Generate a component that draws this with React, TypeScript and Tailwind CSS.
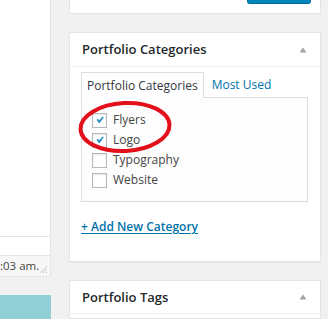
import React from 'react'

const CATEGORIES = [
  { name: 'Flyers', checked: true },
  { name: 'Logo', checked: true },
  { name: 'Typography', checked: false },
  { name: 'Website', checked: false },
]

function Toggle() {
  return (
    <svg width="8" height="6" viewBox="0 0 8 6" className="shrink-0">
      <polygon points="4,0.5 7.5,5.5 0.5,5.5" fill="#a0a5aa" />
    </svg>
  )
}

function Check({ checked }: { checked: boolean }) {
  return (
    <span className="w-[15px] h-[15px] shrink-0 border border-[#b4b9be] bg-white shadow-[inset_0_1px_2px_rgba(0,0,0,0.1)] flex items-center justify-center">
      {checked && (
        <svg width="16" height="16" viewBox="0 0 20 20">
          <path d="M14.83 4.89l1.34.94-5.81 8.38H9.02L5.78 9.67l1.34-1.25 2.57 2.4z" fill="#1e8cbe" stroke="#1e8cbe" strokeWidth="0.6" />
        </svg>
      )}
    </span>
  )
}

export default function App() {
  return (
    <div
      className="relative w-[328px] h-[319px] overflow-hidden bg-[#f1f1f1] flex"
      style={{ fontFamily: '"Open Sans", "Noto Sans", sans-serif' }}
    >
      {/* left editor column */}
      <div className="w-[51px] shrink-0 flex flex-col">
        <div className="h-[237px] bg-white border-r border-b border-[#e5e5e5]" />
        <div className="h-[18px] bg-white border-r border-[#e5e5e5]" />
        <div className="h-[22px] bg-[#f7f7f7] border border-l-0 border-[#e5e5e5] flex items-center relative">
          <span className="whitespace-nowrap text-[11.5px] text-[#444]">:03 am.</span>
          <svg width="9" height="9" viewBox="0 0 9 9" className="absolute right-[2px] bottom-[2px]">
            <path d="M8 1L1 8M8 4L4 8M8 7L7 8" stroke="#c8c8c8" strokeWidth="1" />
          </svg>
        </div>
        <div className="h-[18px]" />
        <div className="flex-1 bg-[#92cfd7]" />
      </div>

      {/* right sidebar */}
      <div className="pl-[18px] flex flex-col w-[270px] shrink-0">
        <div className="h-[14px] bg-white border border-t-0 border-[#e5e5e5] overflow-hidden flex justify-end items-end pr-[9px] pb-[9px]">
          <div className="w-[64px] h-[28px] shrink-0 bg-[#0085ba] border border-[#0073aa] border-b-[#006799] rounded-[3px]" />
        </div>

        <div className="mt-[18px] bg-white border border-[#e5e5e5] shadow-[0_1px_1px_rgba(0,0,0,0.04)]">
          <div className="h-[34px] border-b border-[#eeeeee] flex items-center justify-between pl-[12px] pr-[13px]">
            <span className="text-[13px] font-semibold text-[#23282d] leading-none">Portfolio Categories</span>
            <Toggle />
          </div>
          <div className="pl-[11px] pr-[12px] pt-[5px] pb-[24px]">
            <div className="flex items-end text-[12px]">
              <div className="h-[26px] px-[5px] border border-b-0 border-[#dddddd] bg-white flex items-center text-[#32373c] relative z-10 -mb-px">
                Portfolio Categories
              </div>
              <div className="h-[25px] pl-[8px] flex items-center text-[#0073aa]">Most Used</div>
            </div>
            <div className="border border-[#dddddd] bg-[#fdfdfd] pt-[12px] pb-[11px] pl-[10px]">
              {CATEGORIES.map(c => (
                <label key={c.name} className="h-[20px] flex items-center gap-[6px] text-[12px] text-[#444]">
                  <Check checked={c.checked} />
                  <span>{c.name}</span>
                </label>
              ))}
            </div>
            <div className="mt-[15px] h-[20px] flex items-center">
              <a className="text-[12px] font-semibold text-[#0073aa] underline underline-offset-2">+ Add New Category</a>
            </div>
          </div>
        </div>

        <div className="mt-[18px] bg-white border border-[#e5e5e5] flex-1">
          <div className="h-[33px] border-b border-[#eeeeee] flex items-center justify-between pl-[12px] pr-[13px]">
            <span className="text-[13px] font-semibold text-[#23282d] leading-none">Portfolio Tags</span>
            <Toggle />
          </div>
        </div>
      </div>

      {/* annotation */}
      <svg className="absolute left-0 top-0 pointer-events-none" width="328" height="319">
        <ellipse cx="125" cy="127" rx="44.5" ry="24" fill="none" stroke="#e3101b" strokeWidth="4" transform="rotate(-3 125 127)" />
      </svg>
    </div>
  )
}
